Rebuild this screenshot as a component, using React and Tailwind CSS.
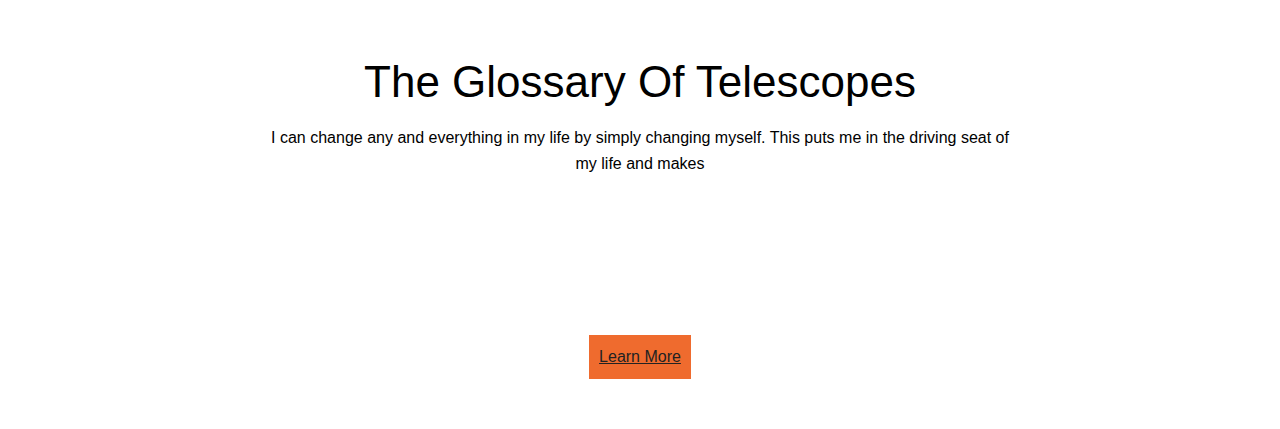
import React from 'react';

const App = () => {
  return (
    <div className="min-h-[429px] bg-white font-['Liberation_Sans',Arial,sans-serif] text-black">
      {/* Hero */}
      <section className="flex flex-col items-center px-4 pt-[54px] text-center">
        <h1 className="text-[44px] leading-[56px] font-normal">The Glossary Of Telescopes</h1>
        <p className="mt-[15px] max-w-[750px] text-[16px] leading-[26px]">
          I can change any and everything in my life by simply changing myself. This puts me in the driving seat of my life and makes
        </p>
        <a
          href="#"
          className="mt-[158px] bg-[#ef6b2e] px-[10px] py-[11px] text-[16px] leading-[22px] text-[#222] underline"
        >
          Learn More
        </a>
      </section>
    </div>
  );
};

export default App;
